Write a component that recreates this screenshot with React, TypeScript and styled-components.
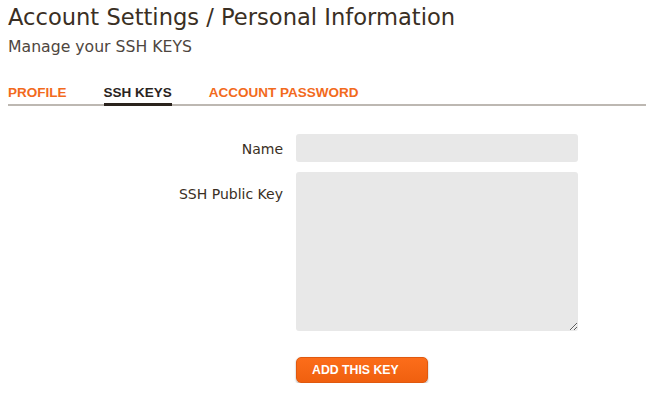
import React from "react";
import styled, { createGlobalStyle } from "styled-components";

const Global = createGlobalStyle`
  html, body { margin: 0; padding: 0; background: #fff; }
  body { font-family: "DejaVu Sans", "Lucida Grande", Verdana, sans-serif; }
  * { box-sizing: border-box; }
`;

const Page = styled.div`
  width: 646px;
  padding: 4px 0 0 8px;
`;

const Title = styled.h1`
  margin: 0;
  font-size: 22.6px;
  font-weight: normal;
  color: #3a2f24;
  line-height: 26px;
`;

const Subtitle = styled.h2`
  margin: 8px 0 0;
  font-size: 15.7px;
  font-weight: normal;
  color: #4e4640;
  line-height: 18px;
`;

const Tabs = styled.nav`
  display: flex;
  gap: 37px;
  margin-top: 30px;
  border-bottom: 2px solid #bdb8b2;
`;

const Tab = styled.a<{ $active?: boolean }>`
  font-family: "Liberation Sans", Arial, sans-serif;
  font-size: 13.5px;
  font-weight: bold;
  color: ${(p) => (p.$active ? "#2a231d" : "#f26a1c")};
  padding-bottom: 3px;
  margin-bottom: -2px;
  border-bottom: 3px solid ${(p) => (p.$active ? "#2a231d" : "transparent")};
  text-decoration: none;
  line-height: 14px;
`;

const Form = styled.form`
  display: grid;
  grid-template-columns: 275px 282px;
  column-gap: 13px;
  row-gap: 10px;
  margin-top: 28px;
`;

const Label = styled.label<{ $top?: number }>`
  text-align: right;
  font-size: 14px;
  line-height: 16px;
  color: #3a2f24;
  padding-top: ${(p) => p.$top ?? 7}px;
`;

const Input = styled.input`
  width: 282px;
  height: 28px;
  border: none;
  border-radius: 3px;
  background: #e8e8e8;
  outline: none;
`;

const TextArea = styled.textarea`
  width: 282px;
  height: 159px;
  border: none;
  border-radius: 3px;
  background: #e8e8e8;
  outline: none;
  display: block;
`;

const ButtonCell = styled.div`
  grid-column: 2;
  padding-top: 16px;
`;

const Button = styled.button`
  width: 132px;
  height: 26px;
  border: 1px solid #e0590f;
  border-radius: 5px;
  background: linear-gradient(#fc6d1a, #f0600f);
  box-shadow: 0 1px 2px rgba(0, 0, 0, 0.35);
  color: #fff;
  font-family: "Liberation Sans", Arial, sans-serif;
  font-size: 12.3px;
  font-weight: bold;
  text-align: left;
  padding: 0 0 0 15px;
`;

export default function App() {
  return (
    <Page>
      <Global />
      <Title>Account Settings / Personal Information</Title>
      <Subtitle>Manage your SSH KEYS</Subtitle>
      <Tabs>
        <Tab>PROFILE</Tab>
        <Tab $active>SSH KEYS</Tab>
        <Tab>ACCOUNT PASSWORD</Tab>
      </Tabs>
      <Form onSubmit={(e) => e.preventDefault()}>
        <Label>Name</Label>
        <Input />
        <Label $top={14}>SSH Public Key</Label>
        <TextArea />
        <ButtonCell>
          <Button type="submit">ADD THIS KEY</Button>
        </ButtonCell>
      </Form>
    </Page>
  );
}
